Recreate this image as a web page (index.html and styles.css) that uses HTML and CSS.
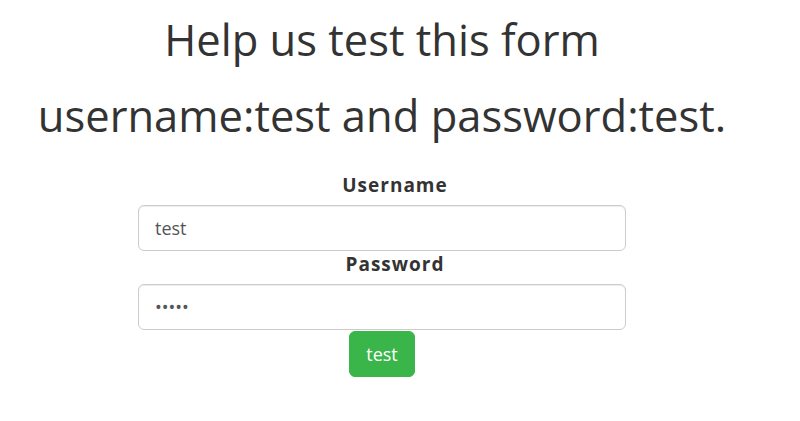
FILE: index.html
```html
<!DOCTYPE html>
<html lang="en">
<head>
<meta charset="utf-8">
<title>Help us test this form</title>
<link rel="stylesheet" href="styles.css">
</head>
<body>
<div class="container">
  <h1 class="title">Help us test this form<br>username:test and password:test.</h1>
  <form class="login" onsubmit="return false;">
    <label class="field-label" for="username">Username</label>
    <input class="field" id="username" type="text" value="test">
    <label class="field-label field-label-second" for="password">Password</label>
    <input class="field" id="password" type="password" value="tests">
    <button class="btn-test" type="submit">test</button>
  </form>
</div>
</body>
</html>
```

FILE: styles.css
```css
html, body {
  margin: 0;
  padding: 0;
  background: #fff;
}

body {
  font-family: "Open Sans", "Noto Sans", sans-serif;
  color: #333;
}

.container {
  width: 764px;
  text-align: center;
}

.title {
  margin: 2px 0 0;
  font-size: 43.5px;
  font-weight: 400;
  line-height: 76px;
  color: #333;
}

.login {
  width: 488px;
  margin: 19px auto 0;
  display: flex;
  flex-direction: column;
}

.field-label {
  display: block;
  padding-left: 26px;
  font-size: 19px;
  font-weight: 700;
  letter-spacing: 1px;
  line-height: 24px;
  margin-bottom: 8px;
  color: #333;
}

.field-label-second {
  margin-top: 1px;
}

.field {
  box-sizing: border-box;
  width: 100%;
  height: 46px;
  padding: 10px 16px;
  font-family: "Open Sans", "Noto Sans", sans-serif;
  font-size: 18px;
  line-height: 1.3333;
  color: #555;
  background: #fff;
  border: 1px solid #ccc;
  border-radius: 6px;
  box-shadow: inset 0 1px 1px rgba(0, 0, 0, 0.075);
  outline: none;
}

.btn-test {
  align-self: center;
  margin-top: 1px;
  height: 46px;
  padding: 10px 16px;
  font-family: "Open Sans", "Noto Sans", sans-serif;
  font-size: 18px;
  line-height: 1.3333;
  color: #fff;
  background: #39b54a;
  border: 1px solid #39b54a;
  border-radius: 6px;
  cursor: pointer;
}
```
